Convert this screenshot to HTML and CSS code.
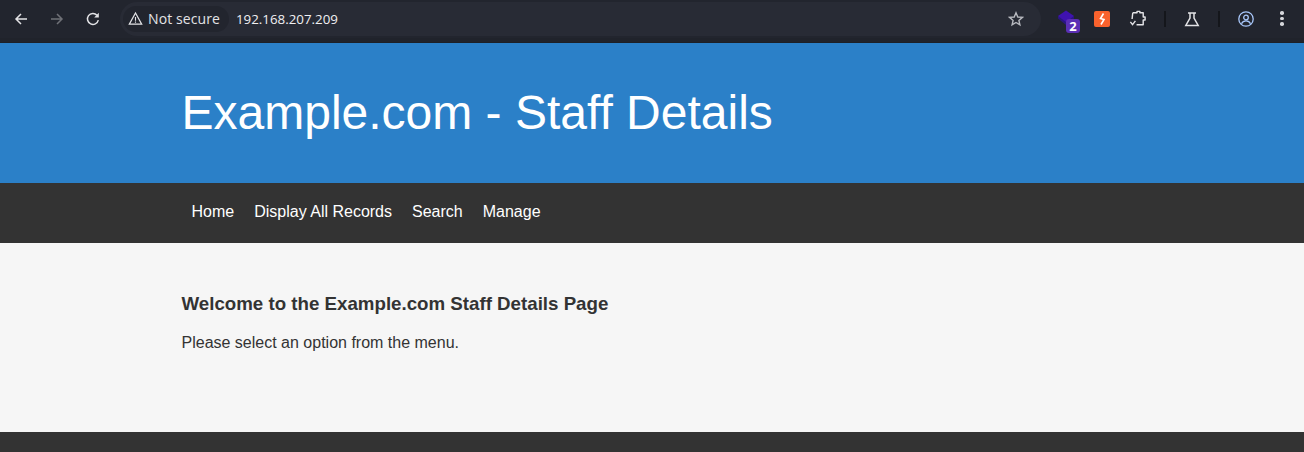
FILE: index.html
```html
<!DOCTYPE html>
<html lang="en">
<head>
<meta charset="utf-8">
<title>Example.com - Staff Details</title>
<link rel="stylesheet" href="styles.css">
</head>
<body>
<div class="toolbar">
  <div class="navbtns">
    <svg class="ic" viewBox="0 0 16 16"><path d="M14 8H3M8 3 3 8l5 5" fill="none" stroke="#e3e3e6" stroke-width="1.5"/></svg>
    <svg class="ic" viewBox="0 0 16 16"><path d="M2 8h11M8 3l5 5-5 5" fill="none" stroke="#6f7177" stroke-width="1.5"/></svg>
    <svg class="ic" viewBox="0 0 16 16"><path d="M13.3 9.200A5.500 5.500 0 1 1 12 4.200" fill="none" stroke="#e3e3e6" stroke-width="1.500"/><path d="M13.800 1.800v4.600H9.200z" fill="#e3e3e6"/></svg>
  </div>
  <div class="omnibox">
    <div class="chip">
      <svg class="warn" viewBox="0 0 16 16"><path d="M8 2.200 14.600 14H1.400z" fill="none" stroke="#e3e3e6" stroke-width="1.300"/><path d="M7.400 6.500h1.200v4H7.400zM7.400 11.200h1.200v1.200H7.400z" fill="#e3e3e6"/></svg>
      <span class="chip-text">Not secure</span>
    </div>
    <span class="url">192.168.207.209</span>
    <svg class="star" viewBox="0 0 16 16"><path d="M8 1.800 9.800 6l4.600.4-3.500 3 1 4.500L8 11.500 4.100 13.900l1-4.500-3.500-3L6.200 6z" fill="none" stroke="#b8bac0" stroke-width="1.400"/></svg>
  </div>
  <div class="exts">
    <div class="ext-stack">
      <svg class="ext-layers" viewBox="0 0 18 18"><path d="M0 6.500v2L8 15l8-6.500v-2z" fill="#2a1680"/><path d="M8 .5 16 6 8 12 0 6z" fill="#3f12b0"/></svg>
      <span class="badge">2</span>
    </div>
    <div class="bolt"><svg viewBox="0 0 16 16"><path d="M9.500 2.500 6.500 7.500l3.500 1-3 5" fill="none" stroke="#fff" stroke-width="1.600"/></svg></div>
    <svg class="ic puzzle" viewBox="0 0 20 20"><path d="M5 4h4.500V2.500h3V4H16v4.500h2v3h-2v5H9M5 4l-.7 6.500" fill="none" stroke="#e3e3e6" stroke-width="1.500" stroke-linejoin="round"/><path d="M2.500 13.500 4.800 16.500l3-4" fill="none" stroke="#e3e3e6" stroke-width="1.500"/></svg>
    <span class="sep"></span>
    <svg class="ic flask" viewBox="0 0 16 16"><path d="M4 2h8M6 2v5L1.800 14.500h12.400L10 7V2" fill="none" stroke="#e3e3e6" stroke-width="1.500"/></svg>
    <span class="sep"></span>
    <svg class="ic avatar" viewBox="0 0 16 16"><circle cx="8" cy="8" r="7.200" fill="none" stroke="#a8c7fa" stroke-width="1.300"/><circle cx="8" cy="6.500" r="2.300" fill="none" stroke="#a8c7fa" stroke-width="1.300"/><path d="M3.500 12.800c1-2.200 2.700-2.900 4.500-2.900s3.500.7 4.500 2.900" fill="none" stroke="#a8c7fa" stroke-width="1.300"/></svg>
    <div class="dots"><i></i><i></i><i></i></div>
  </div>
</div>
<header class="hero">
  <div class="container"><h1>Example.com - Staff Details</h1></div>
</header>
<nav class="menu">
  <div class="container menu-row">
    <a href="#">Home</a>
    <a href="#">Display All Records</a>
    <a href="#">Search</a>
    <a href="#">Manage</a>
  </div>
</nav>
<main class="content">
  <div class="container">
    <h2>Welcome to the Example.com Staff Details Page</h2>
    <p>Please select an option from the menu.</p>
  </div>
</main>
<footer class="foot"></footer>
</body>
</html>
```
FILE: styles.css
```css
* { box-sizing: border-box; }
html, body { margin: 0; padding: 0; height: 100%; overflow: hidden; }
body {
  display: flex;
  flex-direction: column;
  background: #f6f6f6;
  color: #333;
  font-family: "Liberation Sans", Arial, sans-serif;
  font-size: 16px;
}
.toolbar {
  flex: 0 0 43px;
  display: flex;
  align-items: center;
  background: #22252e;
  padding: 0 0 5px 13px;
  border-bottom: 1px solid #1d2027;
  box-shadow: inset 0 -4px 0 #20232b;
  font-family: "Open Sans", sans-serif;
  color: #e3e3e6;
  font-size: 14px;
}
.navbtns { display: flex; gap: 20px; align-items: center; }
.ic { width: 16px; height: 16px; display: block; flex: none; }
.omnibox {
  margin-left: 19px;
  width: 921px;
  height: 34px;
  background: #282b35;
  border-radius: 17px;
  display: flex;
  align-items: center;
  padding: 0 17px 0 3px;
}
.chip {
  height: 26px;
  border-radius: 13px;
  background: #22252e;
  display: flex;
  align-items: center;
  gap: 5px;
  padding: 0 9px 0 5px;
}
.chip-text { letter-spacing: 0.1px; }
.warn { width: 15px; height: 15px; }
.url { margin-left: 7px; flex: 1; font-size: 13.33px; color: #f0f0f2; }
.star { width: 16px; height: 16px; }
.exts { display: flex; align-items: center; margin-left: 17px; }
.ext-stack { position: relative; width: 18px; height: 18px; margin-right: 18px; }
.ext-layers { width: 18px; height: 18px; display: block; }
.badge {
  position: absolute;
  left: 8px;
  top: 9px;
  width: 14px;
  height: 14px;
  border-radius: 3px;
  background: #5b2fb5;
  color: #fff;
  font-size: 13px;
  font-weight: 700;
  line-height: 14px;
  text-align: center;
}
.bolt { width: 16px; height: 16px; border-radius: 2px; background: #f9622d; margin-right: 18px; }
.bolt svg { display: block; width: 16px; height: 16px; }
.puzzle { width: 19px; height: 19px; margin-right: 17px; }
.sep { width: 2px; height: 16px; background: #14161b; flex: none; }
.flask { margin: 0 18px; }
.avatar { margin: 0 26px 0 18px; }
.dots { display: flex; flex-direction: column; gap: 2px; }
.dots i { display: block; width: 3.500px; height: 3.500px; border-radius: 50%; background: #d5d6da; }

.container { width: 941px; margin: 0 auto; }
.hero { flex: 0 0 140px; background: #2b80c8; color: #fff; display: flex; align-items: center; }
h1 { margin: 0; font-size: 48px; font-weight: 400; line-height: 1.2; }
.menu { flex: 0 0 60px; background: #333; display: flex; align-items: center; padding-bottom: 2px; }
.menu-row { display: flex; }
.menu-row a { padding: 0 10px; color: #fff; text-decoration: none; line-height: 20px; }
.content { flex: 0 0 189px; padding-top: 50px; }
h2 { margin: 0 0 17px; font-size: 18.720px; line-height: 22px; font-weight: 700; }
p { margin: 0; line-height: 22px; }
.foot { flex: 1; background: #333; }
```
